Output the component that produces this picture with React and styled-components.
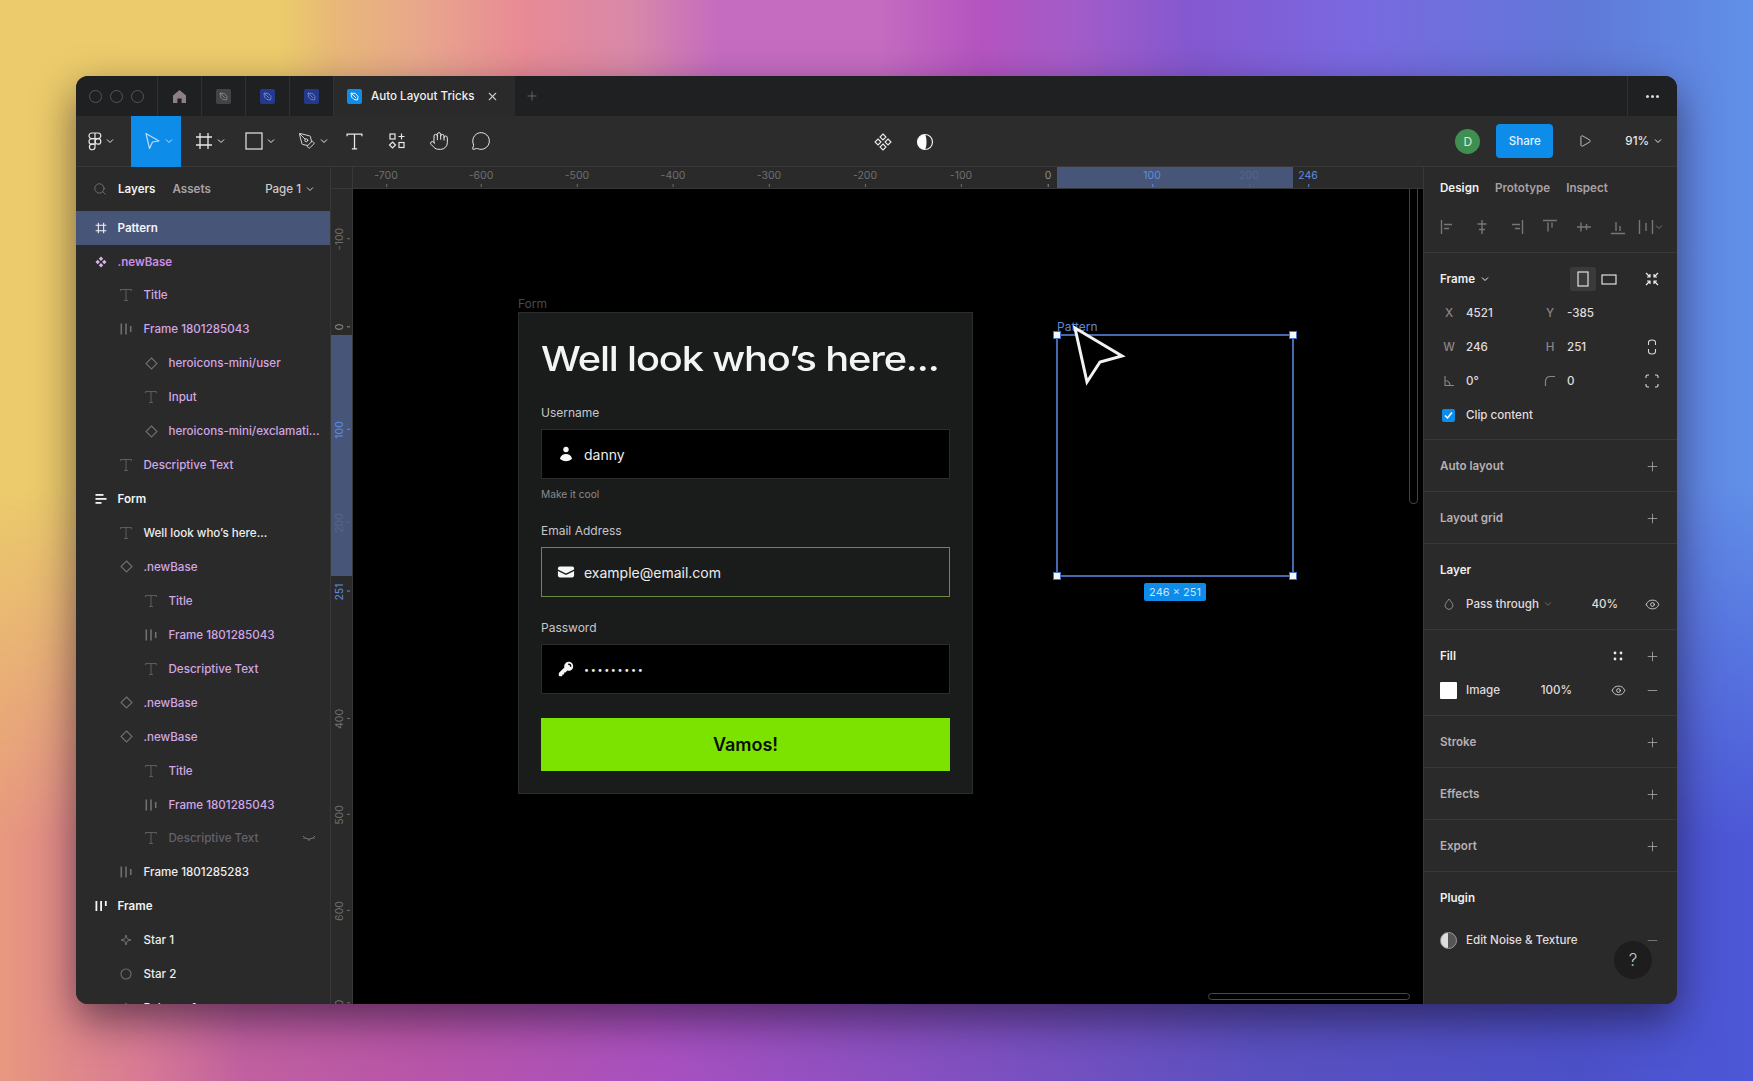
import React from "react";
import styled, { createGlobalStyle } from "styled-components";
import { ChevronDown, Eye, Hand, MessageCircle, Minus, PenTool, Play, Plus, Search, X } from "lucide-react";

const GlobalStyle = createGlobalStyle`
  html, body {
    margin: 0;
    padding: 0;
    overflow: hidden;
  }
  body {
    font-family: Inter, "Liberation Sans", sans-serif;
    font-size: 11.6px;
    color: #e6e6e6;
  }
`;

const Backdrop = styled.div`
  width: 1753px;
  height: 1081px;
  box-sizing: border-box;
  padding: 76px 76px 77px 76px;
  position: relative;
  background: linear-gradient(
    90deg,
    #e8987f 0%,
    #d87a94 8%,
    #c060a0 14%,
    #b855a8 24%,
    #a850c0 38%,
    #8850c0 52%,
    #5a50c0 72%,
    #4c50c8 90%,
    #4c58d8 100%
  );
  /* upper half of the wash, fades out into the colours below */
  &::before {
    content: "";
    position: absolute;
    inset: 0;
    background: linear-gradient(
      90deg,
      #ebcb6b 0%,
      #ebcb6b 16%,
      #e8b878 19%,
      #e8a78c 24%,
      #e88a96 30%,
      #d888a8 36%,
      #c56cc0 41%,
      #c56cc0 50%,
      #b454c0 56%,
      #a45cc8 61%,
      #8458d0 68%,
      #7a68e0 77%,
      #6078d8 90%,
      #6090e8 100%
    );
    -webkit-mask-image: linear-gradient(180deg, #000 45%, transparent 78%);
    mask-image: linear-gradient(180deg, #000 45%, transparent 78%);
  }
`;

const Window = styled.div`
  height: 100%;
  display: flex;
  flex-direction: column;
  position: relative;
  overflow: hidden;
  border-radius: 12px;
  background: #2a2a2a;
  box-shadow: 0 16px 42px rgba(20, 10, 30, 0.55);
`;

/* tab bar */
const TabBar = styled.div`
  height: 40px;
  flex: none;
  display: flex;
  background: #1f2021;
`;

const Lights = styled.div`
  width: 82px;
  display: flex;
  align-items: center;
  gap: 8.3px;
  padding-left: 12.5px;
  box-sizing: border-box;
  border-right: 1px solid #303132;
`;

const Light = styled.span`
  width: 13px;
  height: 13px;
  box-sizing: border-box;
  border: 1px solid #555;
  border-radius: 50%;
`;

const Tab = styled.div`
  width: 44px;
  display: flex;
  align-items: center;
  justify-content: center;
  box-sizing: border-box;
  border-right: 1px solid #303132;
  color: #8c8084;
`;

const ActiveTab = styled.div`
  width: 181px;
  display: flex;
  align-items: center;
  padding-left: 13px;
  box-sizing: border-box;
  background: #2a2a2a;
  color: #f0f0f0;
  font-weight: 500;
  gap: 9px;
`;

const FileThumb = styled.span`
  width: 15px;
  height: 15px;
  border-radius: 2px;
  flex: none;
  display: flex;
  align-items: center;
  justify-content: center;
  background: ${(p) => p.$color};
  color: ${(p) => p.$ink};
`;

const CloseTab = styled(X)`
  margin-left: 3px;
  color: #c8c8c8;
`;

const AddTab = styled.div`
  display: flex;
  align-items: center;
  padding-left: 10px;
  color: #777;
  flex: 1;
`;

const MoreTab = styled.div`
  width: 50px;
  display: flex;
  align-items: center;
  justify-content: center;
  gap: 2px;
  box-sizing: border-box;
  border-left: 1px solid #303132;
`;

const Dot = styled.span`
  width: 3px;
  height: 3px;
  border-radius: 50%;
  background: #d6d6d6;
`;

/* toolbar */
const Toolbar = styled.div`
  height: 51px;
  flex: none;
  display: flex;
  align-items: center;
  box-sizing: border-box;
  border-bottom: 1px solid #383838;
  background: #2c2c2c;
  color: #e8e8e8;
  position: relative;
`;

const ToolButton = styled.div`
  width: ${(p) => p.$w || 50}px;
  height: 51px;
  flex: none;
  display: flex;
  align-items: center;
  justify-content: ${(p) => (p.$center ? "center" : "flex-start")};
  gap: 4px;
  padding-left: ${(p) => (p.$center ? 0 : p.$pad || 12)}px;
  box-sizing: border-box;
  background: ${(p) => (p.$active ? "#0d8ce9" : "transparent")};
  color: ${(p) => (p.$active ? "#bcdcf6" : "inherit")};
`;

const ToolGroup = styled.div`
  display: flex;
  align-items: center;
`;

const CenterTools = styled.div`
  position: absolute;
  left: 798px;
  top: 0;
  height: 51px;
  display: flex;
  align-items: center;
  gap: 24px;
`;

const RightTools = styled.div`
  margin-left: auto;
  display: flex;
  align-items: center;
  padding-right: 15px;
`;

const Avatar = styled.div`
  width: 25px;
  height: 25px;
  border-radius: 50%;
  background: #3f8f52;
  color: #dbe9dd;
  display: flex;
  align-items: center;
  justify-content: center;
  font-size: 12px;
  margin-right: 16px;
`;

const ShareButton = styled.div`
  width: 57px;
  height: 34px;
  border-radius: 4px;
  background: #0d8ce9;
  color: #e4f1fb;
  display: flex;
  align-items: center;
  justify-content: center;
  font-weight: 500;
  margin-right: 25px;
`;

const Zoom = styled.div`
  display: flex;
  align-items: center;
  gap: 5px;
  margin-left: 33px;
  font-weight: 500;
`;

/* workspace */
const Workspace = styled.div`
  flex: 1;
  min-height: 0;
  display: flex;
`;

const LeftPanel = styled.aside`
  width: 255px;
  flex: none;
  display: flex;
  flex-direction: column;
  overflow: hidden;
  background: #2a2a2a;
  border-right: 1px solid #383838;
  box-sizing: border-box;
`;

const PanelTabs = styled.div`
  height: 43.6px;
  flex: none;
  display: flex;
  align-items: center;
  padding: 0 16px 0 17px;
  color: #b9b1b4;
  font-weight: 500;
`;

const PanelTab = styled.span`
  font-weight: 600;
  color: ${(p) => (p.$on ? "#f2f2f2" : "#a9a1a5")};
  margin-left: ${(p) => p.$gap || 0}px;
`;

const SearchGlyph = styled(Search)`
  color: #8a8a8a;
  margin-right: 11px;
`;

const PageSelect = styled.span`
  margin-left: auto;
  display: flex;
  align-items: center;
  gap: 5px;
  font-weight: 500;
  color: #cfc9cb;
`;

const LayerRow = styled.div`
  height: 33.95px;
  flex: none;
  display: flex;
  align-items: center;
  gap: 7.5px;
  padding-left: ${(p) => 17 + p.$level * 25}px;
  padding-right: 14px;
  font-weight: ${(p) => (p.$level === 0 ? 600 : 500)};
  color: ${(p) => p.$color};
  background: ${(p) => (p.$selected ? "#475578" : "transparent")};
  white-space: nowrap;
`;

const LayerIcon = styled.span`
  width: 16px;
  height: 16px;
  flex: none;
  display: flex;
  align-items: center;
  justify-content: center;
  color: ${(p) => p.$color || "#6f6f74"};
  margin-right: ${(p) => (p.$level === 0 ? 1 : 2)}px;
`;

const HiddenMark = styled.span`
  margin-left: auto;
  color: #77777a;
  display: flex;
`;

const Center = styled.div`
  flex: 1;
  display: grid;
  grid-template-columns: 22px 1fr;
  grid-template-rows: 22px 1fr;
  min-width: 0;
`;

const RulerCorner = styled.div`
  background: #2a2a2a;
  border-bottom: 1px solid #383838;
  border-right: 1px solid #383838;
  box-sizing: border-box;
`;

const TopRuler = styled.div`
  position: relative;
  overflow: hidden;
  background: #2a2a2a;
  border-bottom: 1px solid #383838;
  box-sizing: border-box;
`;

const SideRuler = styled.div`
  position: relative;
  overflow: hidden;
  background: #2a2a2a;
  border-right: 1px solid #383838;
  box-sizing: border-box;
`;

const RulerBand = styled.div`
  position: absolute;
  background: #475578;
`;

const TopMark = styled.span`
  position: absolute;
  top: 2px;
  transform: translateX(-50%);
  font-size: 10.5px;
  line-height: 14px;
  color: ${(p) => p.$color || "#6f6f6f"};
  &::after {
    content: "";
    position: absolute;
    left: 50%;
    top: 15px;
    width: 1px;
    height: 3px;
    background: ${(p) => p.$color || "#6f6f6f"};
  }
`;

const SideMark = styled.span`
  position: absolute;
  left: 2px;
  line-height: 14px;
  font-size: 10.5px;
  writing-mode: vertical-rl;
  transform: translateY(-50%) rotate(180deg);
  color: ${(p) => p.$color || "#6f6f6f"};
  &::after {
    content: "";
    position: absolute;
    left: -3px;
    top: 50%;
    width: 3px;
    height: 1px;
    background: ${(p) => p.$color || "#6f6f6f"};
  }
`;

const Canvas = styled.div`
  position: relative;
  overflow: hidden;
  background: #000;
`;

const FormFrame = styled.div`
  position: absolute;
  left: 165px;
  top: 123px;
  width: 455px;
  box-sizing: border-box;
  padding: 24px 22px 22px;
  background: #1a1c1c;
  border: 1px solid #2b2d2d;
`;

const FrameLabel = styled.span`
  position: absolute;
  left: -1px;
  top: -17px;
  font-size: 12px;
  line-height: 15px;
  color: ${(p) => p.$color || "#4a4a4a"};
`;

const Title = styled.h1`
  margin: 0 0 23px;
  height: 44px;
  line-height: 44px;
  font-family: Inter, sans-serif;
  font-size: 34px;
  font-weight: 500;
  letter-spacing: -1px;
  color: #f4f4f4;
  white-space: nowrap;
  transform: scaleX(1.17);
  transform-origin: left center;
`;

const FieldLabel = styled.label`
  display: block;
  height: 18px;
  line-height: 18px;
  font-size: 12px;
  color: #c9c5c8;
  margin-bottom: 7px;
`;

const Field = styled.div`
  height: 50px;
  display: flex;
  align-items: center;
  gap: 9px;
  padding-left: 15px;
  box-sizing: border-box;
  background: ${(p) => (p.$focused ? "transparent" : "#000")};
  border: 1px solid ${(p) => (p.$focused ? "#6b8a42" : "#2b2d2d")};
  color: #ededed;
  font-size: 14px;
`;

const Hint = styled.div`
  height: 16px;
  line-height: 16px;
  margin: 7px 0 20px;
  font-size: 10.2px;
  color: #8d8a8c;
`;

const FieldSpacer = styled.div`
  height: 22px;
`;

const Dots = styled.span`
  font-size: 9px;
  letter-spacing: 1.65px;
`;

const SubmitButton = styled.button`
  display: block;
  width: 100%;
  height: 53px;
  margin-top: 24px;
  border: 0;
  background: #7ce300;
  color: #0a0f04;
  font-family: Inter, sans-serif;
  font-size: 18px;
  font-weight: 600;
`;

const Selection = styled.div`
  position: absolute;
  left: 703px;
  top: 145px;
  width: 238px;
  height: 243px;
  box-sizing: border-box;
  border: 2px solid #4668ae;
`;

const Handle = styled.span`
  position: absolute;
  width: 8px;
  height: 8px;
  box-sizing: border-box;
  background: #f4f6fa;
  border: 1px solid #3f73c9;
  left: ${(p) => (p.$x ? "auto" : "-5px")};
  right: ${(p) => (p.$x ? "-5px" : "auto")};
  top: ${(p) => (p.$y ? "auto" : "-5px")};
  bottom: ${(p) => (p.$y ? "-5px" : "auto")};
`;

const SizeBadge = styled.div`
  position: absolute;
  left: 50%;
  top: 247px;
  transform: translateX(-50%);
  width: 62px;
  height: 18px;
  line-height: 18px;
  text-align: center;
  border-radius: 2px;
  background: #0d8ce9;
  color: #cfe3f5;
  font-size: 11px;
  white-space: nowrap;
`;

const BigCursor = styled.svg`
  position: absolute;
  left: 718px;
  top: 135px;
`;

const ScrollV = styled.div`
  position: absolute;
  right: 5px;
  top: 0;
  width: 9px;
  height: 315px;
  box-sizing: border-box;
  border: 1px solid #444;
  border-top: 0;
  border-radius: 0 0 5px 5px;
`;

const ScrollH = styled.div`
  position: absolute;
  left: 855px;
  bottom: 4px;
  width: 202px;
  height: 7px;
  box-sizing: border-box;
  border: 1px solid #4a4a4a;
  border-radius: 4px;
`;

/* right panel */
const RightPanel = styled.aside`
  width: 254px;
  flex: none;
  position: relative;
  background: #2a2a2a;
  border-left: 1px solid #383838;
  box-sizing: border-box;
  color: #e0dcdd;
`;

const DesignTabs = styled.div`
  height: 42px;
  display: flex;
  align-items: center;
  padding-left: 16px;
  gap: 16px;
`;

const AlignRow = styled.div`
  height: 44px;
  display: flex;
  align-items: center;
  padding: 0 0 7px 16px;
  gap: 18px;
  box-sizing: border-box;
  border-bottom: 1px solid #383838;
  color: #77767a;
`;

const DistGroup = styled.span`
  display: flex;
  align-items: center;
  gap: 1px;
  margin-left: -6px;
`;

const Section = styled.section`
  padding: 9px 13px ${(p) => p.$pb ?? 8}px 16px;
  border-bottom: ${(p) => (p.$last ? "none" : "1px solid #383838")};
`;

const HeadRow = styled.div`
  height: 34px;
  display: flex;
  align-items: center;
  justify-content: space-between;
  margin-bottom: ${(p) => p.$after || 0}px;
  font-weight: 600;
  color: ${(p) => (p.$strong ? "#f0f0f0" : "#b7b0b3")};
`;

const HeadActions = styled.div`
  display: flex;
  align-items: center;
  color: #b9b3b6;
`;

const ActionSlot = styled.span`
  width: ${(p) => p.$w || 24}px;
  height: 24px;
  display: flex;
  align-items: center;
  justify-content: center;
  border-radius: 2px;
  background: ${(p) => (p.$active ? "#3a3a3a" : "transparent")};
  color: ${(p) => p.$color || "inherit"};
`;

const TitleGroup = styled.div`
  display: flex;
  align-items: center;
  gap: 6px;
`;

const PropRow = styled.div`
  height: 34px;
  display: grid;
  grid-template-columns: 26px 75px 26px 73px 24px;
  align-items: center;
  font-weight: 500;
`;

const PropIcon = styled.span`
  width: 18px;
  display: flex;
  justify-content: center;
  color: #8d8488;
`;

const EndIcon = styled.span`
  display: flex;
  justify-content: center;
  color: #dcd8da;
`;

const CheckRow = styled.div`
  height: 34px;
  display: flex;
  align-items: center;
  font-weight: 500;
`;

const CheckBox = styled.span`
  width: 13px;
  height: 13px;
  margin: 0 11px 0 2px;
  border-radius: 2px;
  background: #0d8ce9;
  display: flex;
  align-items: center;
  justify-content: center;
`;

const ItemRow = styled.div`
  height: 34px;
  display: grid;
  grid-template-columns: 26px 1fr auto auto;
  align-items: center;
  font-weight: 500;
`;

const Swatch = styled.span`
  width: 17px;
  height: 17px;
  background: #fff;
  border-radius: 1px;
`;

const Percent = styled.span`
  margin-right: ${(p) => p.$gap}px;
`;

const SmallChevron = styled(ChevronDown)`
  color: #77767a;
`;

const PassThrough = styled.span`
  display: flex;
  align-items: center;
  gap: 4px;
`;

const PluginIcon = styled.span`
  width: 17px;
  height: 17px;
  border-radius: 50%;
  background: linear-gradient(90deg, #ddd 0 50%, #555 50% 100%);
  border: 1px solid #999;
  box-sizing: border-box;
`;

const HelpButton = styled.div`
  position: absolute;
  left: 190px;
  top: 774px;
  width: 38px;
  height: 38px;
  border-radius: 50%;
  background: #1d1d1d;
  color: #c9c9c9;
  font-size: 17px;
  font-weight: 300;
  display: flex;
  align-items: center;
  justify-content: center;
`;

/* icons */
const Svg = ({ size = 16, w, h, box = "0 0 16 16", sw = 1, children }) => (
  <svg width={w || size} height={h || size} viewBox={box} fill="none" stroke="currentColor" strokeWidth={sw} aria-hidden="true">
    {children}
  </svg>
);

const Chevron = () => (
  <Svg size={8} box="0 0 8 8">
    <path d="M1 2.5 4 5.5 7 2.5" />
  </Svg>
);

const HomeIcon = () => (
  <svg width="15" height="15" viewBox="0 0 15 15" fill="currentColor" aria-hidden="true">
    <path d="M7.5 1 14 6.4V14H9.6V9.5H5.4V14H1V6.4Z" />
  </svg>
);

const LeafIcon = () => (
  <Svg size={11} box="0 0 11 11" sw={0.9}>
    <path d="M2 2 6.5 2.5 9 5.5 8.5 9 5 8.5 2.5 6Z" />
    <path d="M2 2 7 7" />
  </Svg>
);

const FigmaLogo = () => (
  <svg width="14" height="19" viewBox="0 0 14 19" fill="none" stroke="currentColor" strokeWidth="1.2" aria-hidden="true">
    <path d="M7 1H3.8a2.8 2.8 0 0 0 0 5.6H7ZM7 1h3a2.8 2.8 0 0 1 0 5.6H7Z" />
    <path d="M7 6.6H3.8a2.8 2.8 0 0 0 0 5.6H7Z" />
    <circle cx="10" cy="9.4" r="2.8" />
    <path d="M7 12.2H3.8a2.8 2.8 0 1 0 3.2 2.8Z" />
  </svg>
);

const MoveIcon = () => (
  <svg width="18" height="18" viewBox="0 0 18 18" fill="none" stroke="currentColor" strokeWidth="1.2" aria-hidden="true">
    <path d="M3 1.5 16 9 9.5 10 6.5 16.5Z" strokeLinejoin="round" />
  </svg>
);

const FrameIcon = ({ size = 18, sw = 1.3 }) => (
  <Svg size={size} box="0 0 18 18" sw={sw}>
    <path d="M5 1v16M13 1v16M1 5h16M1 13h16" />
  </Svg>
);

const RectIcon = () => (
  <Svg size={18} box="0 0 18 18" sw={1.2}>
    <rect x="1" y="1" width="16" height="16" />
  </Svg>
);

const TextTool = ({ size = 18, sw = 1.2 }) => (
  <Svg size={size} box="0 0 18 18" sw={sw}>
    <path d="M2 4V2h14v2M9 2v14M6.5 16h5" />
  </Svg>
);

const ComponentsTool = () => (
  <Svg size={18} box="0 0 18 18" sw={1.2}>
    <rect x="2" y="2" width="5" height="5" />
    <path d="M13.5 1.5v6M10.5 4.5h6" />
    <path d="M4.5 10 7.5 13 4.5 16 1.5 13Z" />
    <rect x="11" y="10.5" width="5" height="5" />
  </Svg>
);

const DiamondsIcon = () => (
  <Svg size={18} box="0 0 18 18" sw={1.1}>
    <path d="M9 1 12 4 9 7 6 4ZM4 6 7 9 4 12 1 9ZM14 6 17 9 14 12 11 9ZM9 11 12 14 9 17 6 14Z" />
  </Svg>
);

const ContrastIcon = () => (
  <svg width="18" height="18" viewBox="0 0 18 18" aria-hidden="true">
    <circle cx="9" cy="9" r="7.5" fill="none" stroke="#eee" strokeWidth="1.2" />
    <path d="M9 1.5a7.5 7.5 0 0 0 0 15c2-3 2-12 0-15Z" fill="#fff" />
  </svg>
);

const HashIcon = () => <FrameIcon size={12} sw={1.6} />;

const ClusterIcon = () => (
  <svg width="12" height="12" viewBox="0 0 12 12" fill="currentColor" aria-hidden="true">
    <path d="M6 .5 8.2 2.7 6 4.9 3.8 2.7ZM2.7 3.8 4.9 6 2.7 8.2.5 6ZM9.3 3.8 11.5 6 9.3 8.2 7.1 6ZM6 7.1 8.2 9.3 6 11.5 3.8 9.3Z" />
  </svg>
);

const DiamondIcon = () => (
  <Svg size={13} box="0 0 13 13" sw={1.1}>
    <path d="M6.5 1 12 6.5 6.5 12 1 6.5Z" />
  </Svg>
);

const BarsIcon = () => (
  <svg width="12" height="12" viewBox="0 0 12 12" fill="currentColor" aria-hidden="true">
    <rect x="0.5" y="0.5" width="1.6" height="11" />
    <rect x="5.2" y="0.5" width="1.6" height="11" />
    <rect x="9.9" y="3" width="1.6" height="6" />
  </svg>
);

const TopBarsIcon = () => (
  <svg width="12" height="12" viewBox="0 0 12 12" fill="currentColor" aria-hidden="true">
    <rect x="0.5" y="1" width="1.8" height="10" />
    <rect x="5.2" y="1" width="1.8" height="10" />
    <rect x="9.9" y="1" width="1.8" height="5" />
  </svg>
);

const LeftAlignIcon = () => (
  <svg width="12" height="12" viewBox="0 0 12 12" fill="currentColor" aria-hidden="true">
    <rect x="0.5" y="1" width="8" height="1.8" />
    <rect x="0.5" y="5" width="11" height="1.8" />
    <rect x="0.5" y="9" width="6" height="1.8" />
  </svg>
);

const StarIcon = () => (
  <Svg size={12} box="0 0 12 12" sw={1}>
    <path d="M6 1 7.2 4.8 11 6 7.2 7.2 6 11 4.8 7.2 1 6 4.8 4.8Z" />
  </Svg>
);

const CircleIcon = () => (
  <Svg size={12} box="0 0 12 12" sw={1.1}>
    <circle cx="6" cy="6" r="5" />
  </Svg>
);

const HiddenIcon = () => (
  <Svg size={14} box="0 0 14 14" sw={1}>
    <path d="M1 5c3 4 9 4 12 0M3 6.5 1.5 8M11 6.5 12.5 8M7 8v2" />
  </Svg>
);

const AlignIcon = ({ kind }) => {
  const paths = {
    left: "M1.5 1v14M4 5.5h8M4 9.5h5",
    hcenter: "M8 1v14M3.5 5h9M5 10.5h6",
    right: "M14.5 1v14M4 5.5h8M7 9.5h5",
    top: "M1 1.5h14M6 3.5v9M10 3.5v5",
    vcenter: "M1 8h14M5 3.5v9M10.5 5v6",
    bottom: "M1 14.5h14M6 3v9M10 7v5",
    dist: "M1.5 1v14M14.5 1v14M8 4v8",
  };
  return (
    <Svg size={16} sw={1.4}>
      <path d={paths[kind]} />
    </Svg>
  );
};

const PortraitIcon = () => (
  <Svg w={12} h={16} box="0 0 12 16" sw={1.1}>
    <rect x="1" y="1" width="10" height="14" />
  </Svg>
);

const LandscapeIcon = () => (
  <Svg w={16} h={11} box="0 0 16 11" sw={1.1}>
    <rect x="1" y="1" width="14" height="9" />
  </Svg>
);

const FitIcon = () => (
  <Svg size={14} box="0 0 14 14" sw={1.2}>
    <path d="M1 1 5 5M5 2v3H2M13 1 9 5M9 2v3h3M1 13 5 9M5 12V9H2M13 13 9 9M9 12V9h3" />
  </Svg>
);

const LinkIcon = () => (
  <Svg w={10} h={16} box="0 0 10 16" sw={1.1}>
    <path d="M1.5 6V3.5a3.5 2.5 0 0 1 7 0V6M1.5 10v2.5a3.5 2.5 0 0 0 7 0V10" />
  </Svg>
);

const CornersIcon = () => (
  <Svg size={14} box="0 0 14 14" sw={1.1}>
    <path d="M1 4V2.5A1.5 1.5 0 0 1 2.5 1H4M10 1h1.5A1.5 1.5 0 0 1 13 2.5V4M13 10v1.5a1.5 1.5 0 0 1-1.5 1.5H10M4 13H2.5A1.5 1.5 0 0 1 1 11.5V10" />
  </Svg>
);

const AngleIcon = () => (
  <Svg size={12} box="0 0 12 12" sw={1.1}>
    <path d="M2 1v9.5h9M2 5.5a5 5 0 0 1 5 5" />
  </Svg>
);

const RadiusIcon = () => (
  <Svg size={12} box="0 0 12 12" sw={1.2}>
    <path d="M1.5 11V6a4.5 4.5 0 0 1 4.5-4.5h5" />
  </Svg>
);

const DropIcon = () => (
  <Svg size={12} box="0 0 12 12" sw={1}>
    <path d="M6 1 9.2 5.2a3.9 3.9 0 1 1-6.4 0Z" />
  </Svg>
);

const StylesIcon = () => (
  <svg width="10" height="10" viewBox="0 0 10 10" fill="#e8e8e8" aria-hidden="true">
    <circle cx="2" cy="2" r="1.4" />
    <circle cx="8" cy="2" r="1.4" />
    <circle cx="2" cy="8" r="1.4" />
    <circle cx="8" cy="8" r="1.4" />
  </svg>
);

const UserGlyph = () => (
  <svg width="18" height="18" viewBox="0 0 20 20" fill="#f6f6f6" aria-hidden="true">
    <path d="M10 8a3 3 0 1 0 0-6 3 3 0 0 0 0 6ZM3.465 14.493a1.23 1.23 0 0 0 .41 1.412A9.957 9.957 0 0 0 10 18c2.31 0 4.438-.784 6.131-2.1.43-.333.604-.903.408-1.41a7.002 7.002 0 0 0-13.074.003Z" />
  </svg>
);

const MailGlyph = () => (
  <svg width="18" height="18" viewBox="0 0 20 20" fill="#f6f6f6" aria-hidden="true">
    <path d="M3 4a2 2 0 0 0-2 2v1.161l8.441 4.221a1.25 1.25 0 0 0 1.118 0L19 7.162V6a2 2 0 0 0-2-2H3Z" />
    <path d="m19 8.839-7.77 3.885a2.75 2.75 0 0 1-2.46 0L1 8.839V14a2 2 0 0 0 2 2h14a2 2 0 0 0 2-2V8.839Z" />
  </svg>
);

const KeyGlyph = () => (
  <svg width="18" height="18" viewBox="0 0 20 20" fill="#f6f6f6" aria-hidden="true">
    <path d="M8 7a5 5 0 1 1 3.61 4.804l-1.903 1.903A1 1 0 0 1 9 14H8v1a1 1 0 0 1-1 1H6v1a1 1 0 0 1-1 1H3a1 1 0 0 1-1-1v-2a1 1 0 0 1 .293-.707L8.196 8.39A5.002 5.002 0 0 1 8 7Zm5-3a.75.75 0 0 0 0 1.5A1.5 1.5 0 0 1 14.5 7 .75.75 0 0 0 16 7a3 3 0 0 0-3-3Z" />
  </svg>
);

/* data */
const PINK = "#d3a6e4";
const WHITE = "#eeeeee";
const layerIcons = {
  hash: HashIcon,
  cluster: ClusterIcon,
  text: () => <TextTool size={14} sw={1} />,
  diamond: DiamondIcon,
  bars: BarsIcon,
  topbars: TopBarsIcon,
  left: LeftAlignIcon,
  star: StarIcon,
  circle: CircleIcon,
};

const layers = [
  { name: "Pattern", level: 0, icon: "hash", color: "#f4f4f4", selected: true, iconColor: "#f4f4f4" },
  { name: ".newBase", level: 0, icon: "cluster", color: "#c98de6", iconColor: "#d9b3ea" },
  { name: "Title", level: 1, icon: "text", color: PINK },
  { name: "Frame 1801285043", level: 1, icon: "bars", color: PINK },
  { name: "heroicons-mini/user", level: 2, icon: "diamond", color: PINK },
  { name: "Input", level: 2, icon: "text", color: PINK },
  { name: "heroicons-mini/exclamati...", level: 2, icon: "diamond", color: PINK },
  { name: "Descriptive Text", level: 1, icon: "text", color: PINK },
  { name: "Form", level: 0, icon: "left", color: "#f4f4f4", iconColor: "#f4f4f4" },
  { name: "Well look who’s here...", level: 1, icon: "text", color: WHITE },
  { name: ".newBase", level: 1, icon: "diamond", color: PINK },
  { name: "Title", level: 2, icon: "text", color: PINK },
  { name: "Frame 1801285043", level: 2, icon: "bars", color: PINK },
  { name: "Descriptive Text", level: 2, icon: "text", color: PINK },
  { name: ".newBase", level: 1, icon: "diamond", color: PINK },
  { name: ".newBase", level: 1, icon: "diamond", color: PINK },
  { name: "Title", level: 2, icon: "text", color: PINK },
  { name: "Frame 1801285043", level: 2, icon: "bars", color: PINK },
  { name: "Descriptive Text", level: 2, icon: "text", color: "#66616b", hidden: true },
  { name: "Frame 1801285283", level: 1, icon: "bars", color: WHITE },
  { name: "Frame", level: 0, icon: "topbars", color: "#f4f4f4", iconColor: "#f4f4f4" },
  { name: "Star 1", level: 1, icon: "star", color: WHITE },
  { name: "Star 2", level: 1, icon: "circle", color: WHITE },
  { name: "Polygon 1", level: 1, icon: "star", color: WHITE },
];

const topMarks = [
  ["-700", 33], ["-600", 128], ["-500", 224], ["-400", 320], ["-300", 416], ["-200", 512], ["-100", 608],
  ["0", 695, "#8d8d8d"], ["100", 799, "#5f8ee0"], ["200", 896, "#53678f"], ["246", 955, "#5f8ee0"],
];

const sideMarks = [
  ["-100", 50], ["0", 138, "#8d8d8d"], ["100", 241, "#5f8ee0"], ["200", 334, "#53678f"], ["251", 403, "#5f8ee0"],
  ["400", 530], ["500", 626], ["600", 722], ["0", 814],
];

const corners = [[0, 0], [1, 0], [0, 1], [1, 1]];

const PlusSlot = () => (
  <ActionSlot>
    <Plus size={15} strokeWidth={1.2} />
  </ActionSlot>
);

const SectionHead = ({ title }) => (
  <Section>
    <HeadRow>
      {title}
      <PlusSlot />
    </HeadRow>
  </Section>
);

const App = () => (
  <>
    <GlobalStyle />
    <Backdrop>
      <Window>
        <TabBar>
          <Lights>
            <Light />
            <Light />
            <Light />
          </Lights>
          <Tab>
            <HomeIcon />
          </Tab>
          <Tab>
            <FileThumb $color="#444" $ink="#888">
              <LeafIcon />
            </FileThumb>
          </Tab>
          <Tab>
            <FileThumb $color="#24398c" $ink="#7488c8">
              <LeafIcon />
            </FileThumb>
          </Tab>
          <Tab>
            <FileThumb $color="#24398c" $ink="#7488c8">
              <LeafIcon />
            </FileThumb>
          </Tab>
          <ActiveTab>
            <FileThumb $color="#0d8ce9" $ink="#fff">
              <LeafIcon />
            </FileThumb>
            Auto Layout Tricks
            <CloseTab size={13} strokeWidth={2} />
          </ActiveTab>
          <AddTab>
            <Plus size={14} strokeWidth={1.3} />
          </AddTab>
          <MoreTab>
            <Dot />
            <Dot />
            <Dot />
          </MoreTab>
        </TabBar>

        <Toolbar>
          <ToolButton $w={55}>
            <FigmaLogo />
            <Chevron />
          </ToolButton>
          <ToolButton $active $w={50}>
            <MoveIcon />
            <Chevron />
          </ToolButton>
          <ToolButton $w={52} $pad={14}>
            <FrameIcon />
            <Chevron />
          </ToolButton>
          <ToolButton $w={53}>
            <RectIcon />
            <Chevron />
          </ToolButton>
          <ToolButton $w={47}>
            <PenTool size={18} strokeWidth={1.2} />
            <Chevron />
          </ToolButton>
          <ToolGroup>
            <ToolButton $w={42} $center>
              <TextTool size={19} />
            </ToolButton>
            <ToolButton $w={43} $center>
              <ComponentsTool />
            </ToolButton>
            <ToolButton $w={42} $center>
              <Hand size={20} strokeWidth={1.2} />
            </ToolButton>
            <ToolButton $w={42} $center>
              <MessageCircle size={20} strokeWidth={1.2} />
            </ToolButton>
          </ToolGroup>
          <CenterTools>
            <DiamondsIcon />
            <ContrastIcon />
          </CenterTools>
          <RightTools>
            <Avatar>D</Avatar>
            <ShareButton>Share</ShareButton>
            <Play size={14} strokeWidth={1.3} />
            <Zoom>
              91%
              <Chevron />
            </Zoom>
          </RightTools>
        </Toolbar>

        <Workspace>
          <LeftPanel>
            <PanelTabs>
              <SearchGlyph size={14} strokeWidth={1.2} />
              <PanelTab $on>Layers</PanelTab>
              <PanelTab $gap={17}>Assets</PanelTab>
              <PageSelect>
                Page 1
                <Chevron />
              </PageSelect>
            </PanelTabs>
            {layers.map((layer, i) => {
              const Icon = layerIcons[layer.icon];
              return (
                <LayerRow key={i} $level={layer.level} $color={layer.color} $selected={layer.selected}>
                  <LayerIcon $level={layer.level} $color={layer.iconColor}>
                    <Icon />
                  </LayerIcon>
                  {layer.name}
                  {layer.hidden && (
                    <HiddenMark>
                      <HiddenIcon />
                    </HiddenMark>
                  )}
                </LayerRow>
              );
            })}
          </LeftPanel>

          <Center>
            <RulerCorner />
            <TopRuler>
              <RulerBand style={{ left: 704, top: 0, width: 236, height: 21 }} />
              {topMarks.map(([label, x, color]) => (
                <TopMark key={label} style={{ left: x }} $color={color}>
                  {label}
                </TopMark>
              ))}
            </TopRuler>
            <SideRuler>
              <RulerBand style={{ left: 0, top: 146, width: 21, height: 241 }} />
              {sideMarks.map(([label, y, color], i) => (
                <SideMark key={i} style={{ top: y }} $color={color}>
                  {label}
                </SideMark>
              ))}
            </SideRuler>
            <Canvas>
              <FormFrame>
                <FrameLabel>Form</FrameLabel>
                <Title>Well look who’s here...</Title>
                <FieldLabel>Username</FieldLabel>
                <Field>
                  <UserGlyph />
                  danny
                </Field>
                <Hint>Make it cool</Hint>
                <FieldLabel>Email Address</FieldLabel>
                <Field $focused>
                  <MailGlyph />
                  example@email.com
                </Field>
                <FieldSpacer />
                <FieldLabel>Password</FieldLabel>
                <Field>
                  <KeyGlyph />
                  <Dots>•••••••••</Dots>
                </Field>
                <SubmitButton>Vamos!</SubmitButton>
              </FormFrame>

              <Selection>
                <FrameLabel $color="#5f86d6">Pattern</FrameLabel>
                {corners.map(([x, y]) => (
                  <Handle key={`${x}${y}`} $x={x} $y={y} />
                ))}
                <SizeBadge>246 × 251</SizeBadge>
              </Selection>

              <BigCursor width="56" height="62" viewBox="0 0 56 62" fill="#000" stroke="#f2f2f2" strokeWidth="3">
                <path d="M4 4 51 32 29 38 16 58Z" strokeLinejoin="miter" />
              </BigCursor>

              <ScrollV />
              <ScrollH />
            </Canvas>
          </Center>

          <RightPanel>
            <DesignTabs>
              <PanelTab $on>Design</PanelTab>
              <PanelTab>Prototype</PanelTab>
              <PanelTab>Inspect</PanelTab>
            </DesignTabs>
            <AlignRow>
              <AlignIcon kind="left" />
              <AlignIcon kind="hcenter" />
              <AlignIcon kind="right" />
              <AlignIcon kind="top" />
              <AlignIcon kind="vcenter" />
              <AlignIcon kind="bottom" />
              <DistGroup>
                <AlignIcon kind="dist" />
                <Chevron />
              </DistGroup>
            </AlignRow>

            <Section $pb={7}>
              <HeadRow $strong>
                <TitleGroup>
                  Frame
                  <Chevron />
                </TitleGroup>
                <HeadActions>
                  <ActionSlot $w={26} $active $color="#eee">
                    <PortraitIcon />
                  </ActionSlot>
                  <ActionSlot $w={26} $color="#eee">
                    <LandscapeIcon />
                  </ActionSlot>
                  <ActionSlot $w={18} />
                  <ActionSlot $color="#eee">
                    <FitIcon />
                  </ActionSlot>
                </HeadActions>
              </HeadRow>
              <PropRow>
                <PropIcon>X</PropIcon>
                <span>4521</span>
                <PropIcon>Y</PropIcon>
                <span>-385</span>
                <span />
              </PropRow>
              <PropRow>
                <PropIcon>W</PropIcon>
                <span>246</span>
                <PropIcon>H</PropIcon>
                <span>251</span>
                <EndIcon>
                  <LinkIcon />
                </EndIcon>
              </PropRow>
              <PropRow>
                <PropIcon>
                  <AngleIcon />
                </PropIcon>
                <span>0°</span>
                <PropIcon>
                  <RadiusIcon />
                </PropIcon>
                <span>0</span>
                <EndIcon>
                  <CornersIcon />
                </EndIcon>
              </PropRow>
              <CheckRow>
                <CheckBox>
                  <svg width="9" height="9" viewBox="0 0 9 9" fill="none" stroke="#fff" strokeWidth="1.5" aria-hidden="true">
                    <path d="M1 4.5 3.5 7 8 1.5" />
                  </svg>
                </CheckBox>
                Clip content
              </CheckRow>
            </Section>

            <SectionHead title="Auto layout" />
            <SectionHead title="Layout grid" />

            <Section>
              <HeadRow $strong>Layer</HeadRow>
              <ItemRow>
                <PropIcon>
                  <DropIcon />
                </PropIcon>
                <PassThrough>
                  Pass through
                  <SmallChevron size={10} />
                </PassThrough>
                <Percent $gap={22}>40%</Percent>
                <ActionSlot>
                  <Eye size={15} strokeWidth={1.4} />
                </ActionSlot>
              </ItemRow>
            </Section>

            <Section>
              <HeadRow $strong>
                Fill
                <HeadActions>
                  <ActionSlot $w={44}>
                    <StylesIcon />
                  </ActionSlot>
                  <PlusSlot />
                </HeadActions>
              </HeadRow>
              <ItemRow>
                <Swatch />
                <span>Image</span>
                <Percent $gap={24}>100%</Percent>
                <HeadActions>
                  <ActionSlot $w={44} $color="#e0dcdd">
                    <Eye size={15} strokeWidth={1.4} />
                  </ActionSlot>
                  <ActionSlot>
                    <Minus size={15} strokeWidth={1.2} />
                  </ActionSlot>
                </HeadActions>
              </ItemRow>
            </Section>

            <SectionHead title="Stroke" />
            <SectionHead title="Effects" />
            <SectionHead title="Export" />

            <Section $last>
              <HeadRow $strong $after={8}>Plugin</HeadRow>
              <ItemRow>
                <PluginIcon />
                <span>Edit Noise &amp; Texture</span>
                <span />
                <ActionSlot $color="#8d8d8d">
                  <Minus size={15} strokeWidth={1.2} />
                </ActionSlot>
              </ItemRow>
            </Section>
            <HelpButton>?</HelpButton>
          </RightPanel>
        </Workspace>
      </Window>
    </Backdrop>
  </>
);

export default App;
